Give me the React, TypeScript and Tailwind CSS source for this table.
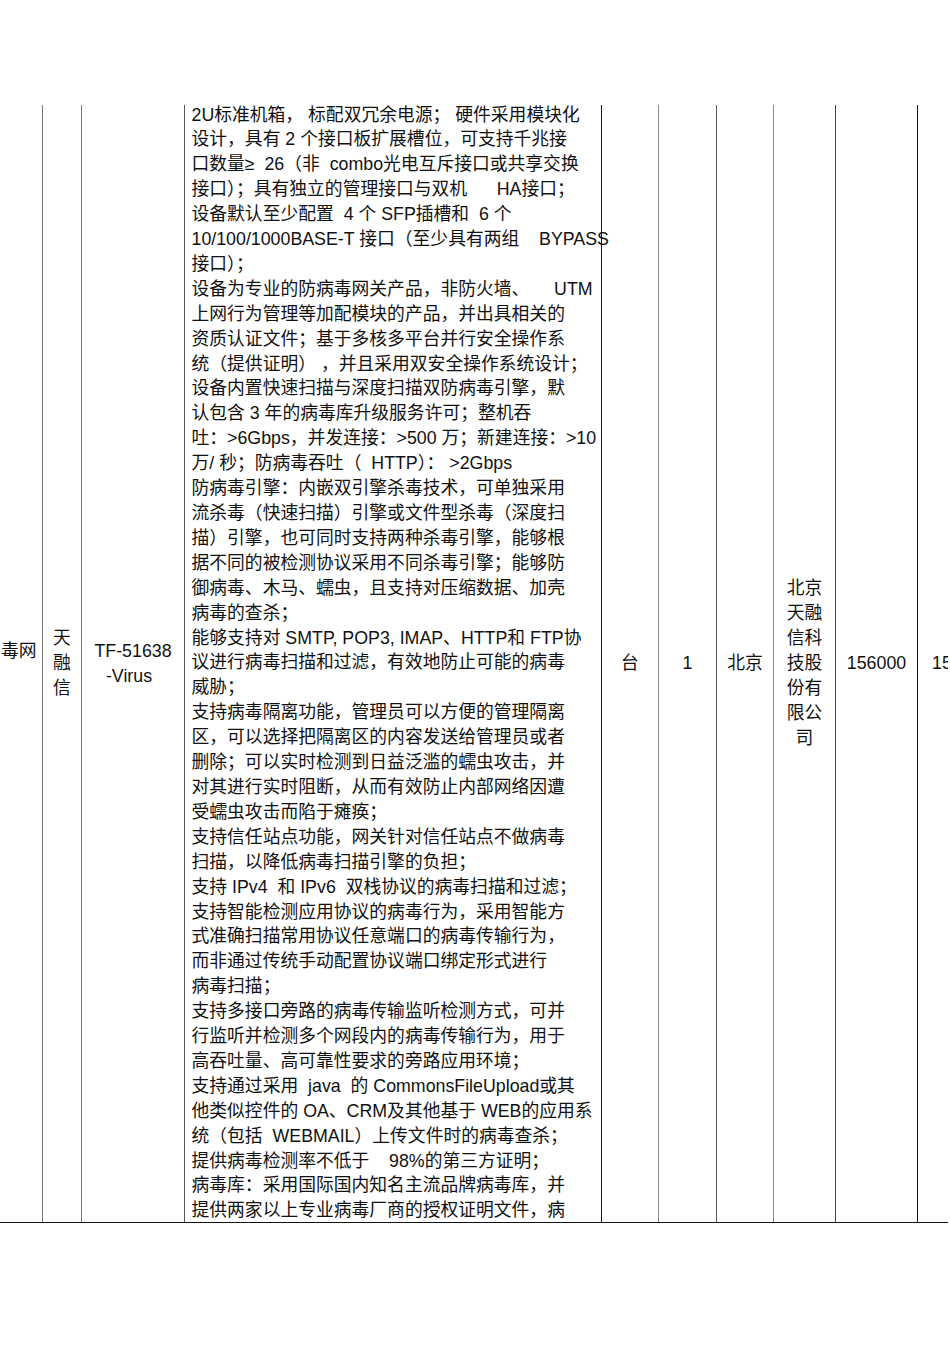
const lines = [
  "2U标准机箱， 标配双冗余电源； 硬件采用模块化",
  "设计，具有 2 个接口板扩展槽位，可支持千兆接",
  "口数量≥  26（非  combo光电互斥接口或共享交换",
  "接口）；具有独立的管理接口与双机      HA接口；",
  "设备默认至少配置  4 个 SFP插槽和  6 个",
  "10/100/1000BASE-T 接口（至少具有两组    BYPASS",
  "接口）；",
  "设备为专业的防病毒网关产品，非防火墙、     UTM",
  "上网行为管理等加配模块的产品，并出具相关的",
  "资质认证文件；基于多核多平台并行安全操作系",
  "统（提供证明） ，并且采用双安全操作系统设计；",
  "设备内置快速扫描与深度扫描双防病毒引擎，默",
  "认包含 3 年的病毒库升级服务许可；整机吞",
  "吐：>6Gbps，并发连接：>500 万；新建连接：>10",
  "万/ 秒；防病毒吞吐（  HTTP）： >2Gbps",
  "防病毒引擎：内嵌双引擎杀毒技术，可单独采用",
  "流杀毒（快速扫描）引擎或文件型杀毒（深度扫",
  "描）引擎，也可同时支持两种杀毒引擎，能够根",
  "据不同的被检测协议采用不同杀毒引擎；能够防",
  "御病毒、木马、蠕虫，且支持对压缩数据、加壳",
  "病毒的查杀；",
  "能够支持对 SMTP, POP3, IMAP、HTTP和 FTP协",
  "议进行病毒扫描和过滤，有效地防止可能的病毒",
  "威胁；",
  "支持病毒隔离功能，管理员可以方便的管理隔离",
  "区，可以选择把隔离区的内容发送给管理员或者",
  "删除；可以实时检测到日益泛滥的蠕虫攻击，并",
  "对其进行实时阻断，从而有效防止内部网络因遭",
  "受蠕虫攻击而陷于瘫痪；",
  "支持信任站点功能，网关针对信任站点不做病毒",
  "扫描，以降低病毒扫描引擎的负担；",
  "支持 IPv4  和 IPv6  双栈协议的病毒扫描和过滤；",
  "支持智能检测应用协议的病毒行为，采用智能方",
  "式准确扫描常用协议任意端口的病毒传输行为，",
  "而非通过传统手动配置协议端口绑定形式进行",
  "病毒扫描；",
  "支持多接口旁路的病毒传输监听检测方式，可并",
  "行监听并检测多个网段内的病毒传输行为，用于",
  "高吞吐量、高可靠性要求的旁路应用环境；",
  "支持通过采用  java  的 CommonsFileUpload或其",
  "他类似控件的 OA、CRM及其他基于 WEB的应用系",
  "统（包括  WEBMAIL）上传文件时的病毒查杀；",
  "提供病毒检测率不低于    98%的第三方证明；",
  "病毒库：采用国际国内知名主流品牌病毒库，并",
  "提供两家以上专业病毒厂商的授权证明文件，病",
];

const company = ["北京", "天融", "信科", "技股", "份有", "限公", "司"];

export default function App() {
  return (
    <div
      className="w-[950px] h-[1345px] bg-white overflow-hidden pt-[105px] text-[17.8px] leading-[24.9px] text-[#111]"
      style={{ fontFamily: '"Liberation Sans", "Noto Sans CJK SC", sans-serif' }}
    >
      <div className="flex w-[948px] h-[1118px] border-b-[1.5px] border-[#111]">
        {/* product name, cut off at the left */}
        <div className="w-[42px] shrink-0 flex flex-col justify-center overflow-hidden pl-[1px]">
          <div className="whitespace-nowrap">毒网</div>
          <div>&nbsp;</div>
        </div>
        {/* brand */}
        <div className="w-[39px] shrink-0 border-l-[1.5px] border-[#7a7a7a] flex flex-col items-center justify-center">
          <div>天</div>
          <div>融</div>
          <div>信</div>
        </div>
        {/* model */}
        <div className="w-[103px] shrink-0 border-l-[1.5px] border-[#7a7a7a] flex flex-col items-center justify-center">
          <div className="whitespace-nowrap">TF-51638</div>
          <div className="whitespace-nowrap pr-[8px]">-Virus</div>
        </div>
        {/* spec */}
        <div className="w-[417px] shrink-0 border-l-[1.5px] border-[#555] pl-[6.5px]">
          <div className="-mt-[2.5px]">
            {lines.map((l, i) => (
              <div key={i} className="whitespace-pre">
                {l}
              </div>
            ))}
          </div>
        </div>
        {/* unit */}
        <div className="w-[57px] shrink-0 border-l border-[#111] flex items-center justify-center">
          台
        </div>
        {/* qty */}
        <div className="w-[58px] shrink-0 border-l-[1.5px] border-[#8a8a8a] flex items-center justify-center">
          1
        </div>
        {/* origin */}
        <div className="w-[57px] shrink-0 border-l-[1.5px] border-[#555] flex items-center justify-center">
          北京
        </div>
        {/* maker */}
        <div className="w-[62px] shrink-0 border-l-[1.5px] border-[#8a8a8a] flex flex-col items-center justify-center">
          {company.map((c) => (
            <div key={c}>{c}</div>
          ))}
        </div>
        {/* unit price */}
        <div className="w-[82px] shrink-0 border-l-[1.5px] border-[#444] flex items-center justify-center">
          156000
        </div>
        {/* total, cut off at the right */}
        <div className="flex-1 min-w-0 border-l border-[#111] flex items-center overflow-hidden pl-[14px]">
          <span className="whitespace-nowrap">156000</span>
        </div>
      </div>
    </div>
  );
}
